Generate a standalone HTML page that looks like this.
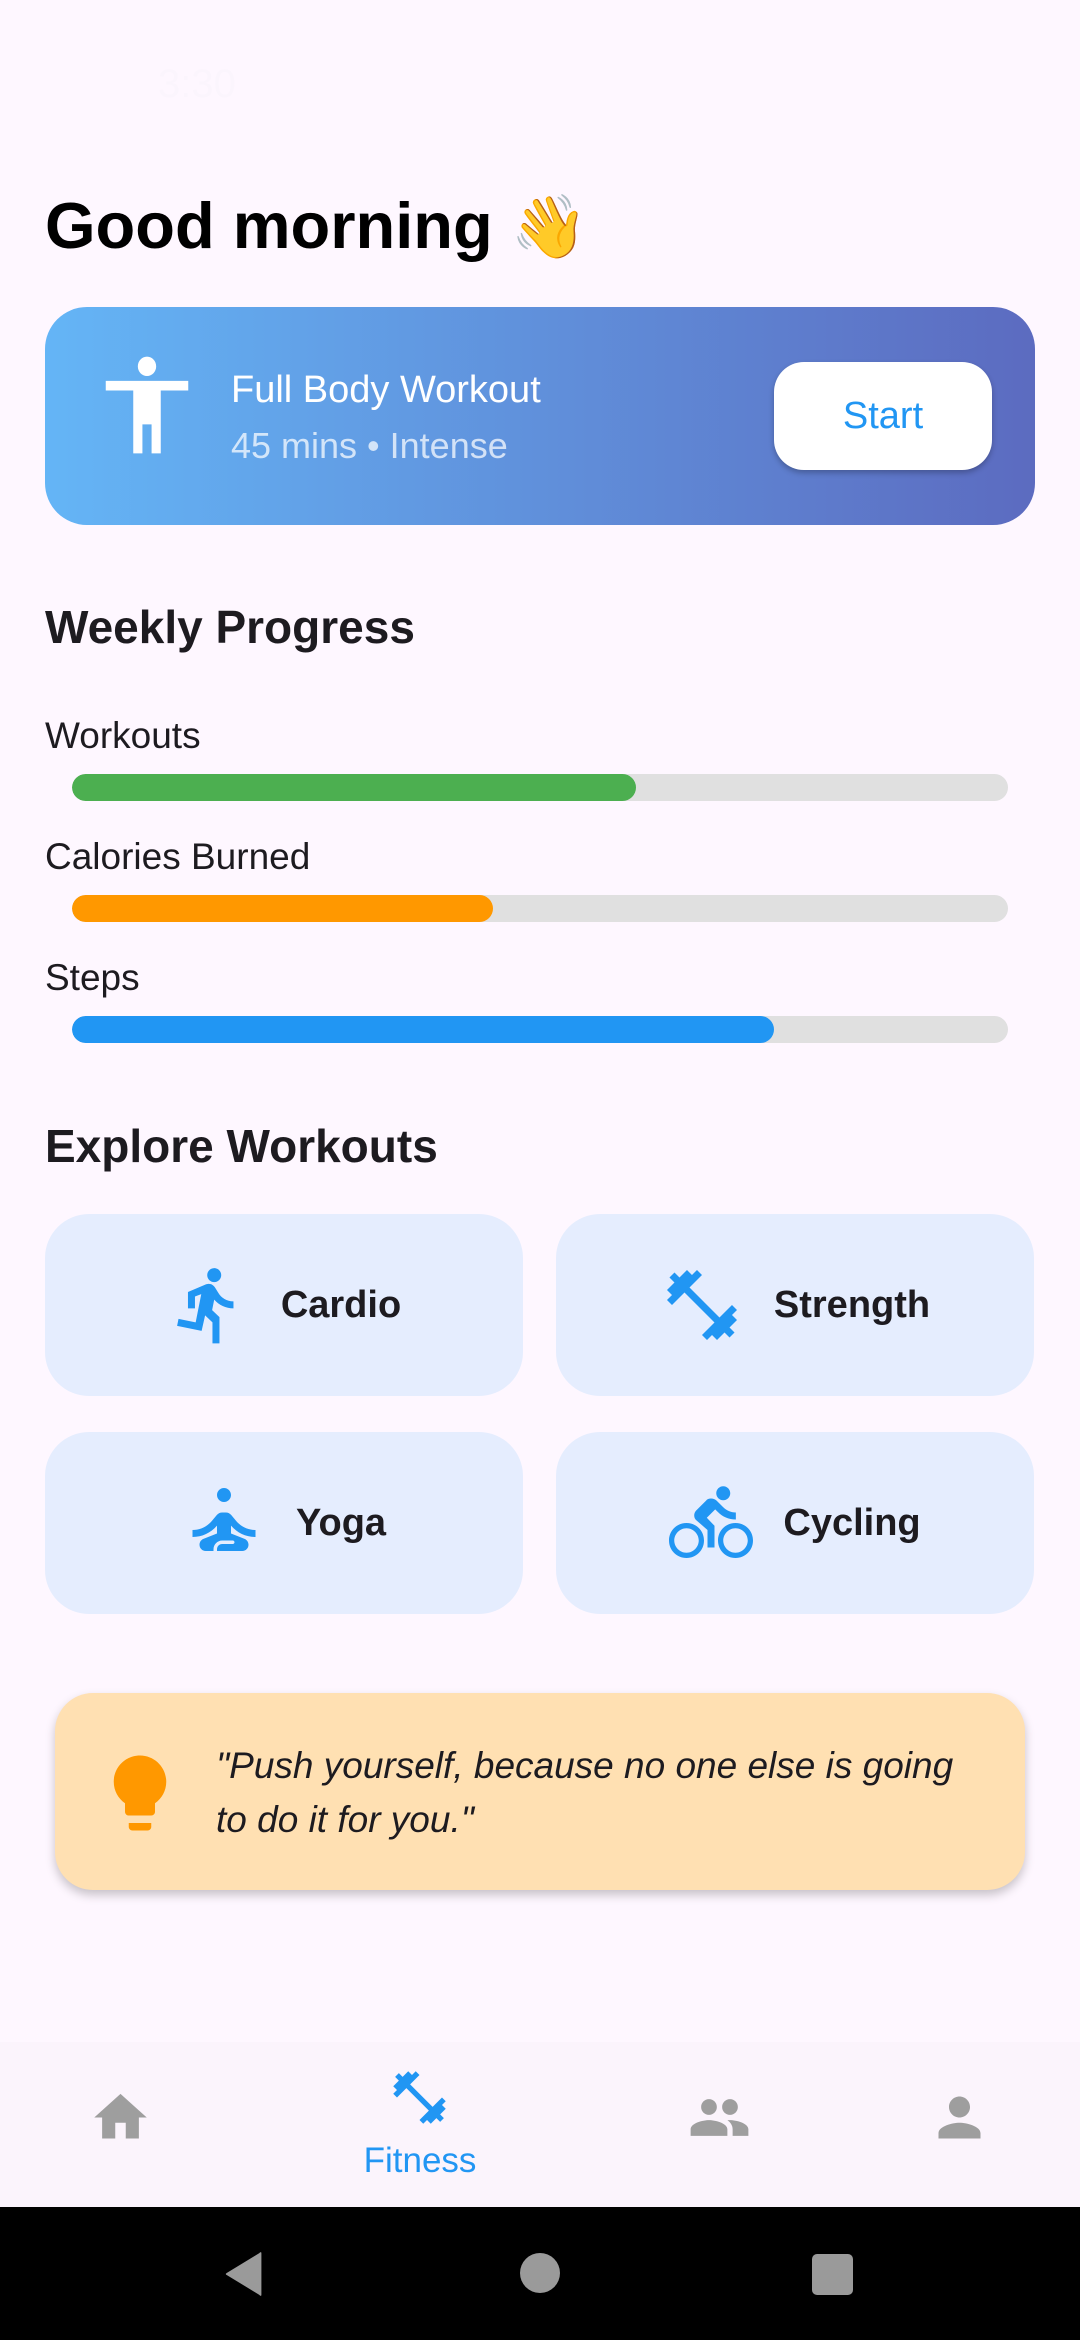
<!DOCTYPE html>
<html><head><meta charset="utf-8"><style>
*{margin:0;padding:0;box-sizing:border-box}
body{width:1080px;height:2340px;background:#fef7ff;font-family:"Liberation Sans",Roboto,sans-serif;position:relative;overflow:hidden;color:#1d1b20}
.a{position:absolute}
.t{white-space:nowrap}
.bar{position:absolute;left:72px;width:936px;height:27px;border-radius:14px;background:#e0e0e0;overflow:hidden}
.bar div{height:100%;border-radius:14px}
.lbl{position:absolute;left:45px;font-size:37px;color:#1d1b20}
.tile{position:absolute;width:478px;height:182px;background:#e5edfe;border-radius:44px;display:flex;align-items:center;justify-content:center;gap:30px;font-weight:bold;font-size:38px;color:#1d1b20}
.tile svg{width:84px;height:84px;fill:#2196f3}
.nav svg{position:absolute;width:63px;height:63px;fill:#9e9e9e}
</style></head><body>
<div class="a t" style="left:158px;top:62px;font-size:40px;color:#fbf5fd">3:30</div>

<div class="a t" style="left:45px;top:188px;font-size:65px;font-weight:bold;color:#000">Good morning <span style="font-family:'Noto Color Emoji',sans-serif;font-size:62px">👋</span></div>

<div class="a" style="left:45px;top:307px;width:990px;height:218px;border-radius:42px;background:linear-gradient(90deg,#64b5f6,#5c6bc0)">
 <svg class="a" style="left:47px;top:40px;width:110px;height:116px;fill:#fff" viewBox="0 0 24 24" preserveAspectRatio="none"><path d="M12 2c1.1 0 2 .9 2 2s-.9 2-2 2-2-.9-2-2 .9-2 2-2zm9 7h-6v13h-2v-6h-2v6H9V9H3V7h18v2z"/></svg>
 <div class="a t" style="left:186px;top:62px;font-size:38px;color:#fff">Full Body Workout</div>
 <div class="a t" style="left:186px;top:118px;font-size:36px;color:rgba(255,255,255,.72)">45 mins • Intense</div>
 <div class="a" style="left:729px;top:55px;width:218px;height:108px;border-radius:30px;background:#fff;box-shadow:0 3px 6px rgba(0,0,0,.25);display:flex;align-items:center;justify-content:center;color:#2196f3;font-size:38px;font-weight:500">Start</div>
</div>

<div class="a t" style="left:45px;top:600px;font-size:46px;font-weight:bold">Weekly Progress</div>

<div class="lbl t" style="top:715px">Workouts</div>
<div class="bar" style="top:774px"><div style="width:60.3%;background:#4caf50"></div></div>
<div class="lbl t" style="top:836px">Calories Burned</div>
<div class="bar" style="top:895px"><div style="width:45%;background:#ff9800"></div></div>
<div class="lbl t" style="top:957px">Steps</div>
<div class="bar" style="top:1016px"><div style="width:75%;background:#2196f3"></div></div>

<div class="a t" style="left:45px;top:1119px;font-size:46px;font-weight:bold">Explore Workouts</div>

<div class="tile" style="left:45px;top:1214px"><svg viewBox="0 0 24 24"><path d="M13.49 5.48c1.1 0 2-.9 2-2s-.9-2-2-2-2 .9-2 2 .9 2 2 2zm-3.6 13.9l1-4.4 2.1 2v6h2v-7.5l-2.1-2 .6-3c1.3 1.5 3.3 2.5 5.5 2.5v-2c-1.9 0-3.5-1-4.3-2.4l-1-1.6c-.4-.6-1-1-1.7-1-.3 0-.5.1-.8.1l-5.2 2.2v4.7h2v-3.4l1.8-.7-1.6 8.1-4.9-1-.4 2 7 1.4z"/></svg>Cardio</div>
<div class="tile" style="left:556px;top:1214px"><svg viewBox="0 0 24 24"><path d="M20.57 14.86L22 13.43 20.57 12 17 15.57 8.43 7 12 3.43 10.57 2 9.14 3.43 7.71 2 5.57 4.14 4.14 2.71 2.71 4.14l1.43 1.43L2 7.71l1.43 1.43L2 10.57 3.43 12 7 8.43 15.57 17 12 20.57 13.43 22l1.43-1.43L16.29 22l2.14-2.14 1.43 1.43 1.43-1.43-1.43-1.43L22 16.29z"/></svg>Strength</div>
<div class="tile" style="left:45px;top:1432px"><svg viewBox="0 0 24 24"><path d="M12 2c1.1 0 2 .9 2 2s-.9 2-2 2-2-.9-2-2 .9-2 2-2zm9 14v-2c-2.24 0-4.16-.96-5.6-2.68l-1.34-1.6c-.38-.46-.94-.72-1.53-.72h-1.05c-.59 0-1.15.26-1.53.72l-1.34 1.6C7.16 13.04 5.24 14 3 14v2c2.77 0 5.19-1.17 7-3.25V15l-3.88 1.55c-.67.27-1.12.93-1.12 1.66C5 19.2 5.8 20 6.79 20H9v-.5c0-1.38 1.12-2.5 2.5-2.5h3c.28 0 .5.22.5.5s-.22.5-.5.5h-3c-.83 0-1.5.67-1.5 1.5v.5h7.21c.99 0 1.79-.8 1.79-1.79 0-.73-.45-1.39-1.12-1.66L14 15v-2.25c1.81 2.08 4.23 3.25 7 3.25z"/></svg>Yoga</div>
<div class="tile" style="left:556px;top:1432px"><svg viewBox="0 0 24 24"><path d="M15.5 5.5c1.1 0 2-.9 2-2s-.9-2-2-2-2 .9-2 2 .9 2 2 2zM5 12c-2.8 0-5 2.2-5 5s2.2 5 5 5 5-2.2 5-5-2.2-5-5-5zm0 8.5c-1.9 0-3.5-1.6-3.5-3.5s1.6-3.5 3.5-3.5 3.5 1.6 3.5 3.5-1.6 3.5-3.5 3.5zm5.8-10l2.4-2.4.8.8c1.3 1.3 3 2.1 5.1 2.1V9c-1.5 0-2.7-.6-3.6-1.5l-1.9-1.9c-.5-.4-1-.6-1.6-.6s-1.1.2-1.4.6L7.8 8.4c-.4.4-.6.9-.6 1.4 0 .6.2 1.1.6 1.4L11 14v5h2v-6.2l-2.2-2.3zM19 12c-2.8 0-5 2.2-5 5s2.2 5 5 5 5-2.2 5-5-2.2-5-5-5zm0 8.5c-1.9 0-3.5-1.6-3.5-3.5s1.6-3.5 3.5-3.5 3.5 1.6 3.5 3.5-1.6 3.5-3.5 3.5z"/></svg>Cycling</div>

<div class="a" style="left:55px;top:1693px;width:970px;height:197px;border-radius:38px;background:#ffe0b2;box-shadow:0 5px 10px rgba(0,0,0,.22)">
 <svg class="a" style="left:40px;top:55px;width:90px;height:90px;fill:#ff9800" viewBox="0 0 24 24"><path d="M9 21c0 .55.45 1 1 1h4c.55 0 1-.45 1-1v-1H9v1zm3-19C8.14 2 5 5.14 5 9c0 2.38 1.19 4.47 3 5.74V17c0 .55.45 1 1 1h6c.55 0 1-.45 1-1v-2.26c1.81-1.27 3-3.36 3-5.74 0-3.86-3.14-7-7-7z"/></svg>
 <div class="a" style="left:161px;top:46px;width:770px;font-size:37px;line-height:54px;font-style:italic;color:#1d1b20">"Push yourself, because no one else is going to do it for you."</div>
</div>

<div class="a nav" style="left:0;top:2042px;width:1080px;height:165px;background:#fbf4fc">
 <svg style="left:89px;top:44px" viewBox="0 0 24 24"><path d="M10 20v-6h4v6h5v-8h3L12 3 2 12h3v8z"/></svg>
 <svg style="left:388px;top:24px;fill:#2196f3" viewBox="0 0 24 24"><path d="M20.57 14.86L22 13.43 20.57 12 17 15.57 8.43 7 12 3.43 10.57 2 9.14 3.43 7.71 2 5.57 4.14 4.14 2.71 2.71 4.14l1.43 1.43L2 7.71l1.43 1.43L2 10.57 3.43 12 7 8.43 15.57 17 12 20.57 13.43 22l1.43-1.43L16.29 22l2.14-2.14 1.43 1.43 1.43-1.43-1.43-1.43L22 16.29z"/></svg>
 <div class="a t" style="left:356px;top:99px;width:128px;text-align:center;font-size:35px;color:#2196f3">Fitness</div>
 <svg style="left:688px;top:44px" viewBox="0 0 24 24"><path d="M16 11c1.66 0 2.99-1.34 2.99-3S17.66 5 16 5c-1.66 0-3 1.34-3 3s1.34 3 3 3zm-8 0c1.66 0 2.99-1.34 2.99-3S9.66 5 8 5C6.34 5 5 6.34 5 8s1.34 3 3 3zm0 2c-2.33 0-7 1.17-7 3.5V19h14v-2.5c0-2.33-4.67-3.5-7-3.5zm8 0c-.29 0-.62.02-.97.05 1.16.84 1.97 1.97 1.97 3.45V19h6v-2.5c0-2.33-4.67-3.5-7-3.5z"/></svg>
 <svg style="left:928px;top:44px" viewBox="0 0 24 24"><path d="M12 12c2.21 0 4-1.790 4-4s-1.79-4-4-4-4 1.79-4 4 1.79 4 4 4zm0 2c-2.67 0-8 1.34-8 4v2h16v-2c0-2.66-5.33-4-8-4z"/></svg>
</div>

<div class="a" style="left:0;top:2207px;width:1080px;height:133px;background:#000">
 <svg class="a" style="left:220px;top:44px;width:46px;height:46px" viewBox="0 0 20 20"><path d="M18 1 L18 19 Q18 20 17 19 L3 10.5 Q2 10 3 9.5 L17 1 Q18 0 18 1Z" fill="#9a9a9a"/></svg>
 <div class="a" style="left:520px;top:46px;width:40px;height:40px;border-radius:50%;background:#9a9a9a"></div>
 <div class="a" style="left:812px;top:47px;width:41px;height:41px;border-radius:5px;background:#9a9a9a"></div>
</div>
</body></html>
